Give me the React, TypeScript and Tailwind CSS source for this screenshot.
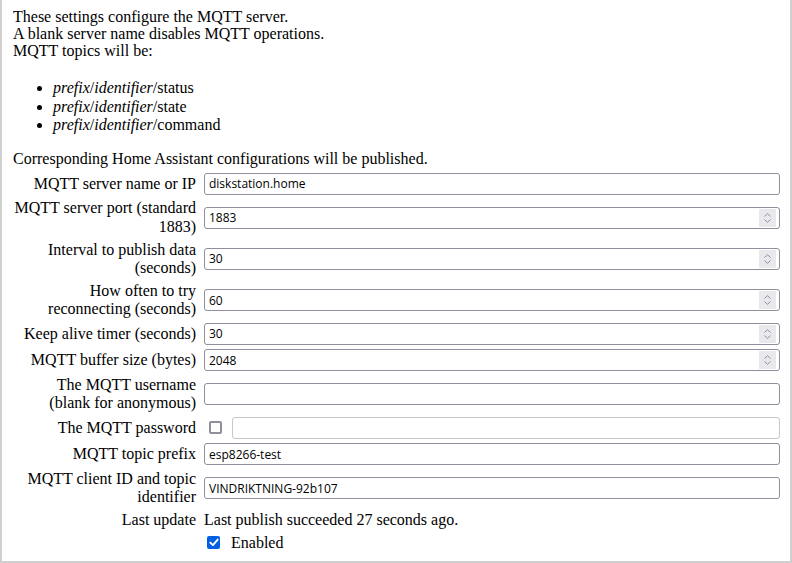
import React from "react";

type Row = {
  label: string;
  value?: string;
  kind: "text" | "number" | "password";
};

const rows: Row[] = [
  { label: "MQTT server name or IP", value: "diskstation.home", kind: "text" },
  { label: "MQTT server port (standard 1883)", value: "1883", kind: "number" },
  { label: "Interval to publish data (seconds)", value: "30", kind: "number" },
  { label: "How often to try reconnecting (seconds)", value: "60", kind: "number" },
  { label: "Keep alive timer (seconds)", value: "30", kind: "number" },
  { label: "MQTT buffer size (bytes)", value: "2048", kind: "number" },
  { label: "The MQTT username (blank for anonymous)", value: "", kind: "text" },
  { label: "The MQTT password", kind: "password" },
  { label: "MQTT topic prefix", value: "esp8266-test", kind: "text" },
  { label: "MQTT client ID and topic identifier", value: "VINDRIKTNING-92b107", kind: "text" },
];

function Spinner() {
  return (
    <div className="absolute right-[4px] top-[2px] flex h-[18px] w-[17px] flex-col items-center justify-center gap-[2px] bg-[#e9e9ed]">
      <svg width="7" height="4" viewBox="0 0 7 4" fill="none">
        <path d="M0.5 3.5 L3.5 0.7 L6.5 3.5" stroke="#8f8f9d" strokeWidth="1" />
      </svg>
      <svg width="7" height="4" viewBox="0 0 7 4" fill="none">
        <path d="M0.5 0.5 L3.5 3.3 L6.5 0.5" stroke="#8f8f9d" strokeWidth="1" />
      </svg>
    </div>
  );
}

function Field({ value, number, disabled }: { value: string; number?: boolean; disabled?: boolean }) {
  return (
    <div className="relative flex-1">
      <input
        readOnly
        disabled={disabled}
        value={value}
        className={`block h-[22px] w-full rounded-[3px] border bg-white px-[4px] font-['Open_Sans',sans-serif] text-[12px] text-black outline-none ${
          disabled ? "border-[#c7c7ce]" : "border-[#8f8f9d]"
        }`}
      />
      {number && <Spinner />}
    </div>
  );
}

export default function App() {
  return (
    <div className="h-[563px] w-[792px] border-x-2 border-b-2 border-[#d0d0d0] bg-white pl-[11px] pr-[10px] font-['Liberation_Serif',serif] text-[16px] text-black">
      <p className="pt-[8px] leading-[17px]">
        These settings configure the MQTT server.
        <br />
        A blank server name disables MQTT operations.
        <br />
        MQTT topics will be:
      </p>
      <ul className="mt-[20px] list-disc pl-[40px] leading-[18.5px]">
        {["status", "state", "command"].map((t) => (
          <li key={t}>
            <i>prefix</i>/<i>identifier</i>/{t}
          </li>
        ))}
      </ul>
      <p className="mt-[15px] leading-[18.4px]">Corresponding Home Assistant configurations will be published.</p>

      <div className="ml-[1px] mt-[5px] grid grid-cols-[182px_1fr] items-center gap-x-[8px] gap-y-[4.4px] leading-[18.4px]">
        {rows.map((r) => (
          <React.Fragment key={r.label}>
            <div className="text-right">{r.label}</div>
            {r.kind === "password" ? (
              <div className="flex items-center">
                <span className="ml-[5px] h-[13px] w-[13px] rounded-[2px] border-2 border-[#8f8f9d] bg-white" />
                <div className="ml-[10px] flex flex-1">
                  <Field value="" disabled />
                </div>
              </div>
            ) : (
              <div className="flex">
                <Field value={r.value ?? ""} number={r.kind === "number"} />
              </div>
            )}
          </React.Fragment>
        ))}
        <div className="text-right">Last update</div>
        <div>Last publish succeeded 27 seconds ago.</div>
        <div />
        <div className="flex items-center">
          <span className="ml-[3px] flex h-[13px] w-[13px] items-center justify-center rounded-[2px] bg-[#0060df]">
            <svg width="10" height="9" viewBox="0 0 10 9" fill="none">
              <path d="M1.3 4.6 L3.9 7.1 L8.7 1.6" stroke="white" strokeWidth="1.9" strokeLinecap="round" strokeLinejoin="round" />
            </svg>
          </span>
          <span className="ml-[11px]">Enabled</span>
        </div>
      </div>
    </div>
  );
}
